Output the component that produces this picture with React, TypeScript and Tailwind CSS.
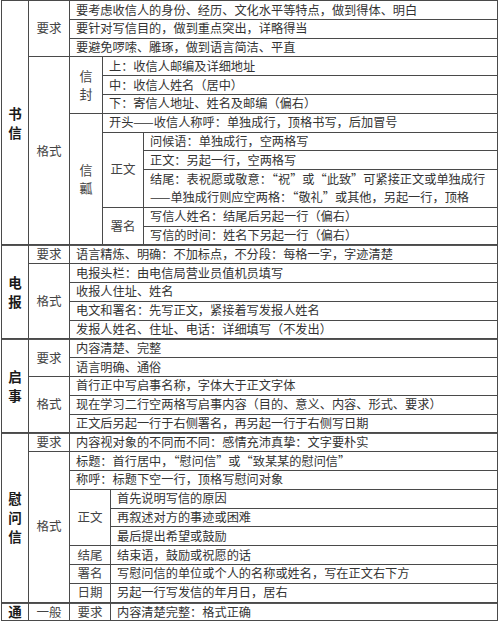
type Cell = { pos: string; text: string | string[]; kind?: 'main' | 'label' | 'vert' | 'text'; sep?: boolean };

const cells: Cell[] = [
  // 书信
  { pos: 'col-start-1 col-span-1 row-start-1 row-span-13', text: '书信', kind: 'main' },
  { pos: 'col-start-2 col-span-1 row-start-1 row-span-3', text: '要求', kind: 'label' },
  { pos: 'col-start-3 col-span-4 row-start-1 row-span-1', text: '要考虑收信人的身份、经历、文化水平等特点，做到得体、明白' },
  { pos: 'col-start-3 col-span-4 row-start-2 row-span-1', text: '要针对写信目的，做到重点突出，详略得当' },
  { pos: 'col-start-3 col-span-4 row-start-3 row-span-1', text: '要避免啰嗦、雕琢，做到语言简洁、平直' },
  { pos: 'col-start-2 col-span-1 row-start-4 row-span-10', text: '格式', kind: 'label' },
  { pos: 'col-start-3 col-span-1 row-start-4 row-span-3', text: '信封', kind: 'vert' },
  { pos: 'col-start-4 col-span-3 row-start-4 row-span-1', text: '上：收信人邮编及详细地址' },
  { pos: 'col-start-4 col-span-3 row-start-5 row-span-1', text: '中：收信人姓名（居中）' },
  { pos: 'col-start-4 col-span-3 row-start-6 row-span-1', text: '下：寄信人地址、姓名及邮编（偏右）' },
  { pos: 'col-start-3 col-span-1 row-start-7 row-span-7', text: '信瓤', kind: 'vert' },
  { pos: 'col-start-4 col-span-3 row-start-7 row-span-1', text: '开头——收信人称呼：单独成行，顶格书写，后加冒号' },
  { pos: 'col-start-4 col-span-2 row-start-8 row-span-4', text: '正文', kind: 'label' },
  { pos: 'col-start-6 col-span-1 row-start-8 row-span-1', text: '问候语：单独成行，空两格写' },
  { pos: 'col-start-6 col-span-1 row-start-9 row-span-1', text: '正文：另起一行，空两格写' },
  {
    pos: 'col-start-6 col-span-1 row-start-10 row-span-2',
    text: ['结尾：表祝愿或敬意：“祝”或“此致”可紧接正文或单独成行', '——单独成行则应空两格：“敬礼”或其他，另起一行，顶格'],
  },
  { pos: 'col-start-4 col-span-2 row-start-12 row-span-2', text: '署名', kind: 'label' },
  { pos: 'col-start-6 col-span-1 row-start-12 row-span-1', text: '写信人姓名：结尾后另起一行（偏右）' },
  { pos: 'col-start-6 col-span-1 row-start-13 row-span-1', text: '写信的时间：姓名下另起一行（偏右）' },
  // 电报
  { pos: 'col-start-1 col-span-1 row-start-14 row-span-5', text: '电报', kind: 'main', sep: true },
  { pos: 'col-start-2 col-span-1 row-start-14 row-span-1', text: '要求', kind: 'label', sep: true },
  { pos: 'col-start-3 col-span-4 row-start-14 row-span-1', text: '语言精炼、明确：不加标点，不分段：每格一字，字迹清楚', sep: true },
  { pos: 'col-start-2 col-span-1 row-start-15 row-span-4', text: '格式', kind: 'label' },
  { pos: 'col-start-3 col-span-4 row-start-15 row-span-1', text: '电报头栏：由电信局营业员值机员填写' },
  { pos: 'col-start-3 col-span-4 row-start-16 row-span-1', text: '收报人住址、姓名' },
  { pos: 'col-start-3 col-span-4 row-start-17 row-span-1', text: '电文和署名：先写正文，紧接着写发报人姓名' },
  { pos: 'col-start-3 col-span-4 row-start-18 row-span-1', text: '发报人姓名、住址、电话：详细填写（不发出）' },
  // 启事
  { pos: 'col-start-1 col-span-1 row-start-19 row-span-5', text: '启事', kind: 'main', sep: true },
  { pos: 'col-start-2 col-span-1 row-start-19 row-span-2', text: '要求', kind: 'label', sep: true },
  { pos: 'col-start-3 col-span-4 row-start-19 row-span-1', text: '内容清楚、完整', sep: true },
  { pos: 'col-start-3 col-span-4 row-start-20 row-span-1', text: '语言明确、通俗' },
  { pos: 'col-start-2 col-span-1 row-start-21 row-span-3', text: '格式', kind: 'label' },
  { pos: 'col-start-3 col-span-4 row-start-21 row-span-1', text: '首行正中写启事名称，字体大于正文字体' },
  { pos: 'col-start-3 col-span-4 row-start-22 row-span-1', text: '现在学习二行空两格写启事内容（目的、意义、内容、形式、要求）' },
  { pos: 'col-start-3 col-span-4 row-start-23 row-span-1', text: '正文后另起一行于右侧署名，再另起一行于右侧写日期' },
  // 慰问信
  { pos: 'col-start-1 col-span-1 row-start-24 row-span-9', text: '慰问信', kind: 'main', sep: true },
  { pos: 'col-start-2 col-span-1 row-start-24 row-span-1', text: '要求', kind: 'label', sep: true },
  { pos: 'col-start-3 col-span-4 row-start-24 row-span-1', text: '内容视对象的不同而不同：感情充沛真挚：文字要朴实', sep: true },
  { pos: 'col-start-2 col-span-1 row-start-25 row-span-8', text: '格式', kind: 'label' },
  { pos: 'col-start-3 col-span-4 row-start-25 row-span-1', text: '标题：首行居中，“慰问信”或“致某某的慰问信”' },
  { pos: 'col-start-3 col-span-4 row-start-26 row-span-1', text: '称呼：标题下空一行，顶格写慰问对象' },
  { pos: 'col-start-3 col-span-2 row-start-27 row-span-3', text: '正文', kind: 'label' },
  { pos: 'col-start-5 col-span-2 row-start-27 row-span-1', text: '首先说明写信的原因' },
  { pos: 'col-start-5 col-span-2 row-start-28 row-span-1', text: '再叙述对方的事迹或困难' },
  { pos: 'col-start-5 col-span-2 row-start-29 row-span-1', text: '最后提出希望或鼓励' },
  { pos: 'col-start-3 col-span-2 row-start-30 row-span-1', text: '结尾', kind: 'label' },
  { pos: 'col-start-5 col-span-2 row-start-30 row-span-1', text: '结束语，鼓励或祝愿的话' },
  { pos: 'col-start-3 col-span-2 row-start-31 row-span-1', text: '署名', kind: 'label' },
  { pos: 'col-start-5 col-span-2 row-start-31 row-span-1', text: '写慰问信的单位或个人的名称或姓名，写在正文右下方' },
  { pos: 'col-start-3 col-span-2 row-start-32 row-span-1', text: '日期', kind: 'label' },
  { pos: 'col-start-5 col-span-2 row-start-32 row-span-1', text: '另起一行写发信的年月日，居右' },
  // 通
  { pos: 'col-start-1 col-span-1 row-start-33 row-span-1', text: '通', kind: 'main', sep: true },
  { pos: 'col-start-2 col-span-1 row-start-33 row-span-1', text: '一般', kind: 'label', sep: true },
  { pos: 'col-start-3 col-span-2 row-start-33 row-span-1', text: '要求', kind: 'label', sep: true },
  { pos: 'col-start-5 col-span-2 row-start-33 row-span-1', text: '内容清楚完整：格式正确', sep: true },
];

function CellView({ cell }: { cell: Cell }) {
  const kind = cell.kind ?? 'text';
  const sep = cell.sep ? 'border-t border-[#555]' : '';
  if (kind === 'main' || kind === 'vert') {
    const chars = (cell.text as string).split('');
    return (
      <div className={`${cell.pos} ${sep} bg-white flex flex-col items-center justify-center`}>
        {chars.map((ch, i) => (
          <span
            key={i}
            className={
              kind === 'main'
                ? 'text-[13.5px] leading-[19px] font-bold text-[#1a1a1a]'
                : 'text-[13px] leading-[18.5px] text-[#444]'
            }
          >
            {ch}
          </span>
        ))}
      </div>
    );
  }
  if (kind === 'label') {
    return (
      <div className={`${cell.pos} ${sep} bg-white flex items-center justify-center text-[12.5px] text-[#444]`}>
        {cell.text}
      </div>
    );
  }
  const lines = Array.isArray(cell.text) ? cell.text : [cell.text];
  return (
    <div className={`${cell.pos} ${sep} bg-white flex flex-col justify-center pl-[6px] text-[12.2px] leading-[18.8px] text-[#333] whitespace-nowrap overflow-hidden`}>
      {lines.map((l, i) => (
        <span key={i}>{l}</span>
      ))}
    </div>
  );
}

export default function App() {
  return (
    <div className="w-[500px] h-[622px] bg-white overflow-hidden font-['Noto_Sans_CJK_SC','Liberation_Serif',serif]">
      <div className="ml-px w-[497px] grid grid-cols-[26px_40px_32px_7px_32px_1fr] grid-rows-[repeat(33,17.8px)] gap-px p-px bg-[#4a4a4a]">
        {cells.map((c, i) => (
          <CellView key={i} cell={c} />
        ))}
      </div>
    </div>
  );
}
